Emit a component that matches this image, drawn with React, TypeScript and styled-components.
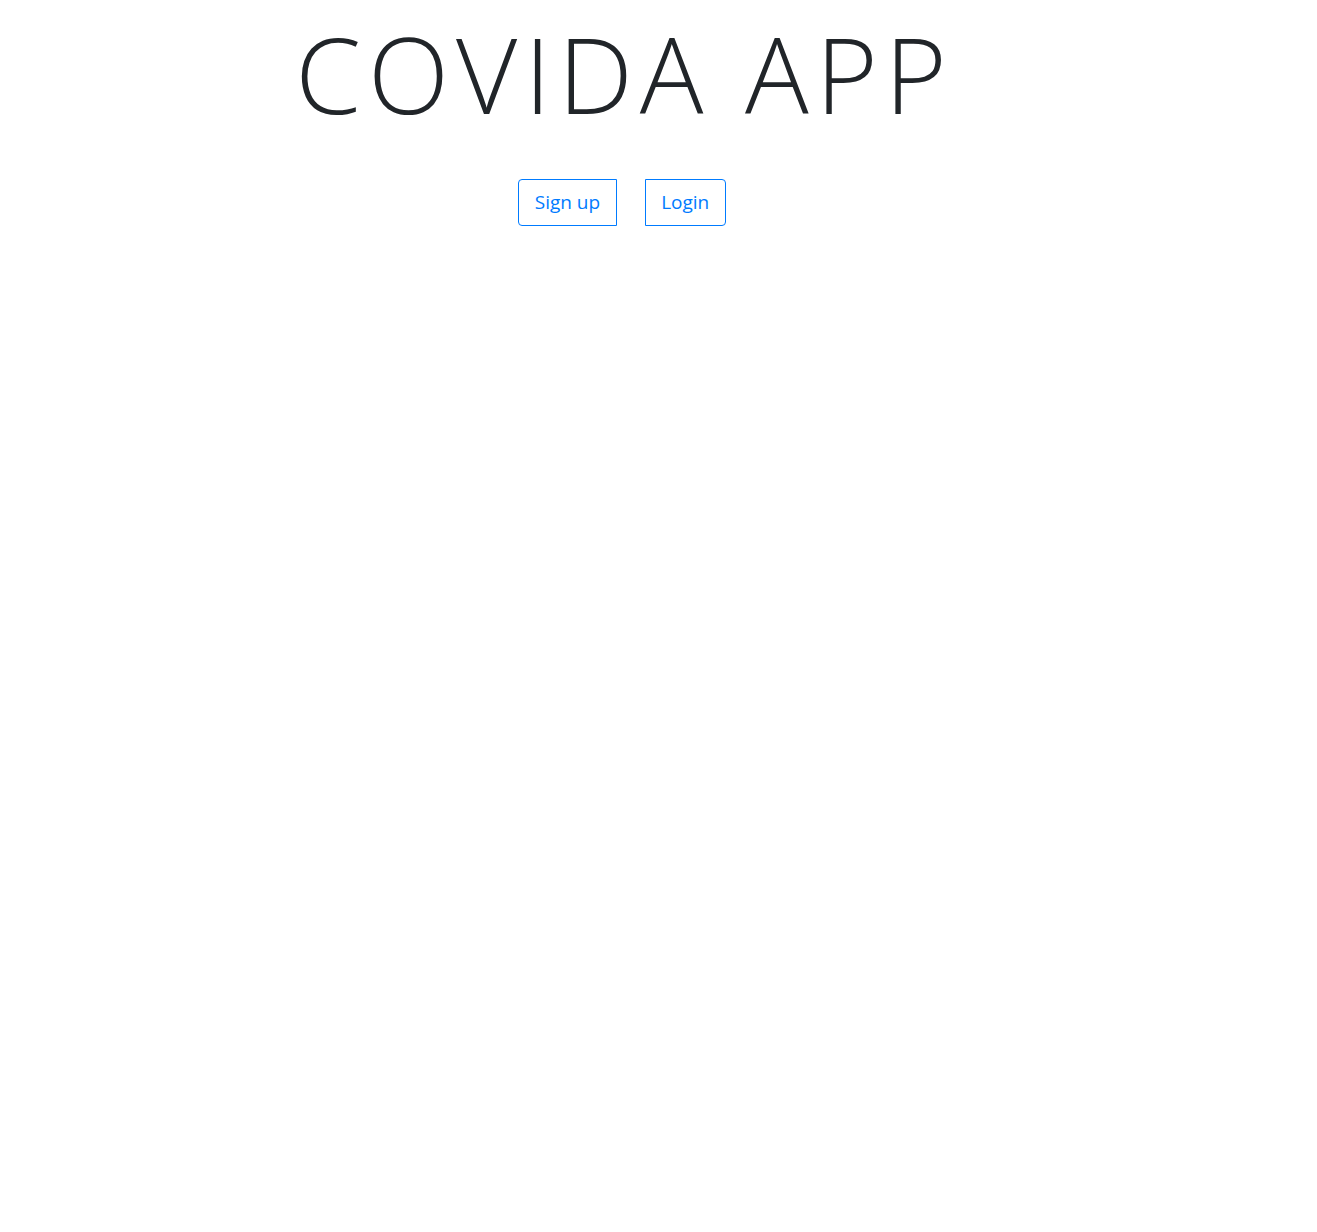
import React from "react";
import styled, { createGlobalStyle } from "styled-components";

const Global = createGlobalStyle`
  html, body { margin: 0; padding: 0; background: #fff; }
  body { font-family: "Open Sans", "Noto Sans", sans-serif; color: #212529; }
`;

const Main = styled.main`
  width: 1242px;
  display: flex;
  flex-direction: column;
  align-items: center;
`;

const Title = styled.h1`
  margin: 0;
  padding-left: 7px;
  font-family: "Open Sans", sans-serif;
  font-weight: 300;
  font-size: 106px;
  letter-spacing: 7px;
  line-height: 146px;
  color: #212529;
`;

const ButtonRow = styled.div`
  display: flex;
  gap: 28px;
  margin-top: 33px;
  padding-left: 2px;
`;

const Button = styled.button<{ $side: "left" | "right" }>`
  font-family: "Open Sans", sans-serif;
  font-size: 19px;
  line-height: 28px;
  padding: 8px 15.5px 9px;
  background: transparent;
  color: #007bff;
  border: 1px solid #007bff;
  border-radius: ${(p) => (p.$side === "left" ? "4px 0 0 4px" : "0 4px 4px 0")};
  cursor: pointer;
`;

export default function App() {
  return (
    <>
      <Global />
      <Main>
        <Title>COVIDA APP</Title>
        <ButtonRow>
          <Button $side="left">Sign up</Button>
          <Button $side="right">Login</Button>
        </ButtonRow>
      </Main>
    </>
  );
}
